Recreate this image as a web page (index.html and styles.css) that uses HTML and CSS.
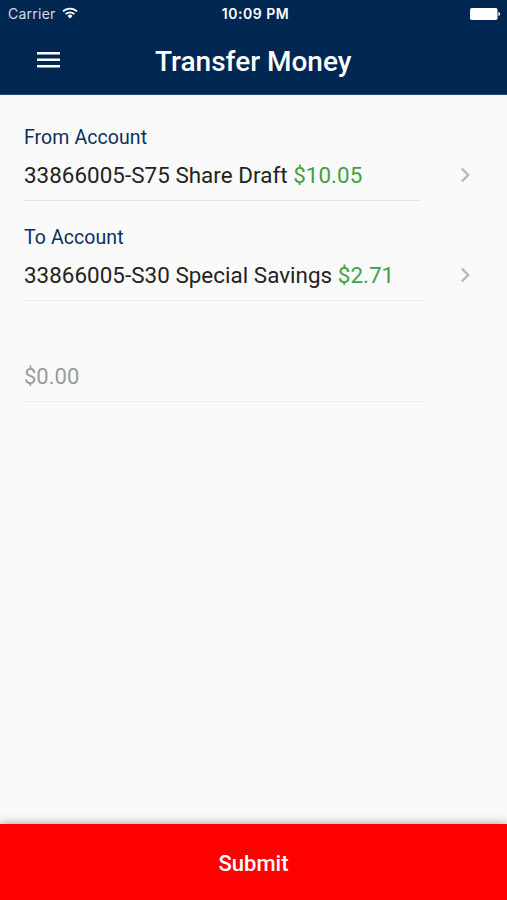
FILE: index.html
```html
<!DOCTYPE html>
<html lang="en">
<head>
<meta charset="utf-8">
<title>Transfer Money</title>
<link rel="stylesheet" href="styles.css">
</head>
<body>
<header class="header">
  <div class="status">
    <div class="carrier"><span>Carrier</span>
      <svg class="wifi" width="16" height="12" viewBox="0 0 16 12" fill="none" stroke="#fff" stroke-width="1.8"><path d="M1 4.4a10 10 0 0 1 14 0M3.6 7.1a6.3 6.3 0 0 1 8.8 0"/><path d="M8 11.4 5.5 8.9a3.5 3.5 0 0 1 5 0z" fill="#fff" stroke="none"/></svg>
    </div>
    <time class="time">10:09 PM</time>
    <svg class="battery" width="31" height="12" viewBox="0 0 31 12" fill="#fff"><rect width="27.5" height="12" rx="1.8"/><path d="M28.4 4q1.8.4 1.8 2t-1.8 2z"/></svg>
  </div>
  <div class="toolbar">
    <svg class="menu" width="23" height="16" viewBox="0 0 23 16" fill="#fff"><path d="M0 0h23v2.6H0zM0 6.5h23v2.6H0zM0 13h23v2.6H0z"/></svg>
    <h1 class="title">Transfer Money</h1>
  </div>
</header>
<main class="form">
  <section class="row">
    <div class="field">
      <div class="label">From Account</div>
      <div class="value">33866005-S75 Share Draft <span class="amount">$10.05</span></div>
    </div>
    <svg class="chevron" width="10" height="16" viewBox="0 0 10 16" fill="none" stroke="#b8b8b8" stroke-width="2.3"><path d="M1.8 1.6 8.3 8l-6.5 6.4"/></svg>
  </section>
  <section class="row">
    <div class="field wide">
      <div class="label">To Account</div>
      <div class="value">33866005-S30 Special Savings <span class="amount">$2.71</span></div>
    </div>
    <svg class="chevron" width="10" height="16" viewBox="0 0 10 16" fill="none" stroke="#b8b8b8" stroke-width="2.3"><path d="M1.8 1.6 8.3 8l-6.5 6.4"/></svg>
  </section>
  <section class="row">
    <div class="field wide faint">
      <div class="label"></div>
      <div class="value placeholder">$0.00</div>
    </div>
  </section>
</main>
<button class="submit">Submit</button>
</body>
</html>
```
FILE: styles.css
```css
* { box-sizing: border-box; }
body {
  margin: 0;
  height: 900px;
  display: flex;
  flex-direction: column;
  background: #fafafa;
  font-family: Roboto, sans-serif;
  overflow: hidden;
}
.header {
  height: 95px;
  background: #002652;
  color: #fff;
  border-bottom: 1px solid #274b78;
}
.status {
  height: 28px;
  padding: 0 6px 0 8px;
  display: grid;
  grid-template-columns: 1fr auto 1fr;
  align-items: center;
  font: 14px/28px Inter, sans-serif;
}
.carrier { display: flex; align-items: center; gap: 6px; color: #d5dce6; letter-spacing: .25px; }
.wifi { margin-top: -3px; }
.time { font-weight: 600; font-size: 14px; letter-spacing: .5px; margin-left: 2px; }
.battery { justify-self: end; }
.toolbar {
  height: 66px;
  padding-left: 37px;
  display: flex;
  align-items: center;
}
.menu { width: 23px; margin-top: -2px; }
.title { margin: 2px 0 0 95px; font-size: 28px; font-weight: 500; line-height: 32px; white-space: nowrap; }
.form { flex: 1; padding: 29px 24px 0; }
.row { height: 100.4px; display: flex; }
.field { width: 396px; height: 77px; border-bottom: 1px solid #e6e6e6; }
.wide { width: 400px; border-color: #ededed; }
.faint { border-color: #f0f0f0; }
.label { height: 27px; font-size: 19.5px; line-height: 27px; color: #0c2f60; letter-spacing: .08px; }
.value { margin-top: 8px; font-size: 22.4px; line-height: 32px; color: #222; white-space: nowrap; letter-spacing: .04px; }
.amount { color: #43a047; }
.placeholder { margin-top: 9px; color: #9b9b9b; font-size: 22px; letter-spacing: 0; }
.chevron { margin: 42.5px 0 0 auto; position: relative; right: 13px; }
.submit {
  height: 76px;
  border: 0;
  padding: 2px 0 0;
  background: #f00;
  color: #fff;
  font: 500 22px Roboto, sans-serif;
  box-shadow: 0 -1px 9px rgba(0, 0, 0, .32);
}
```
